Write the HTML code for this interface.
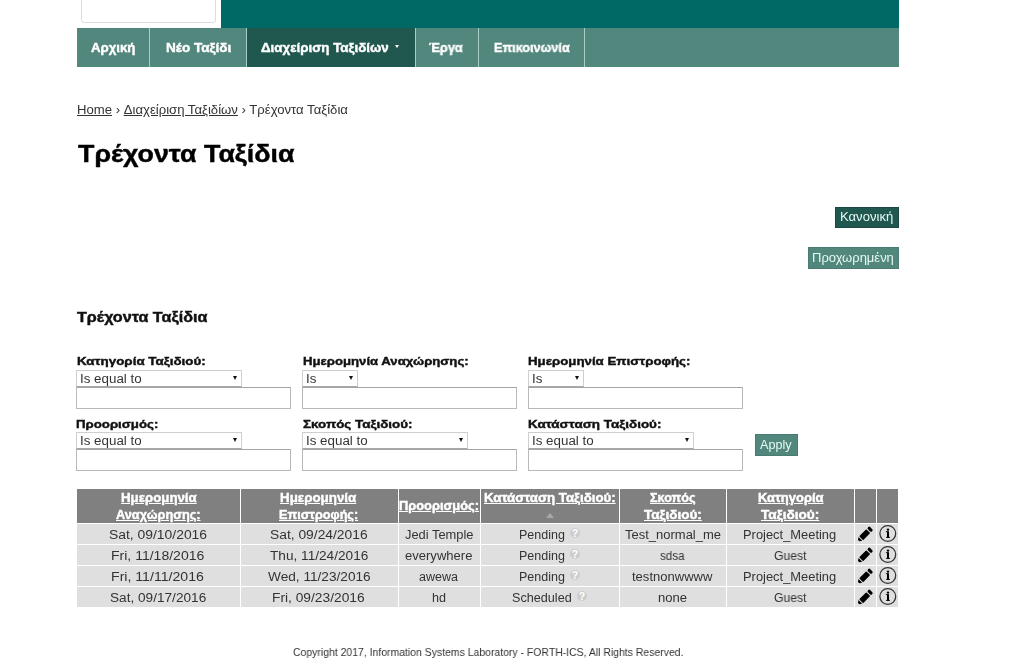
<!DOCTYPE html>
<html><head><meta charset="utf-8"><style>
*{box-sizing:border-box;margin:0;padding:0}
html,body{width:1024px;height:672px;overflow:hidden;background:#fff}
body{position:relative;font-family:"Liberation Sans",sans-serif;color:#333}
.a{position:absolute;white-space:nowrap}
.t{display:inline-block;transform-origin:0 50%;will-change:transform}
u{text-decoration:underline}
.blk{position:absolute}
.sel{position:absolute;height:17px;border:1px solid #cfcfcf;border-bottom:1px solid #a8a8a8;background:#fff;box-shadow:0 1px 0 #d8d8d8}
.sel span{position:absolute;left:2.6px;top:1px;font-size:12.5px;line-height:15px;color:#333;transform-origin:0 50%;display:inline-block;will-change:transform}
.sel i{position:absolute;right:4px;top:4.5px;width:0;height:0;border-left:2.5px solid transparent;border-right:2.5px solid transparent;border-top:4.5px solid #111}
.inp{position:absolute;height:22px;width:215px;border:1px solid #b9b9b9;border-top-color:#a5a5a5;background:#fff}
.hc{position:absolute;background:#808080;color:#fff;font-weight:bold;font-size:12px;text-align:center;line-height:17px}
.hc .t{transform-origin:50% 50%}
.rc{position:absolute;background:#dfdfdf}
.ct{position:absolute;left:0;right:0;top:0;line-height:20px;font-size:12.5px;color:#333;text-align:center}
.ct .t{transform-origin:50% 50%}
.q{position:absolute;width:10px;height:10px;border-radius:5px;background:#cdcdcd;color:#fff;font-size:10.5px;line-height:10px;text-align:center;font-weight:bold}
.pen{position:absolute;left:0;top:0}
.inf{position:absolute;left:0;top:0}
</style></head><body>
<div class="blk" style="left:81px;top:-10px;width:135px;height:33px;border:1px solid #dcdcdc;border-radius:3px;background:#fff"></div>
<div class="blk" style="left:221px;top:0;width:678px;height:28px;background:#006865"></div>
<div class="blk" style="left:77px;top:28px;width:822px;height:39px;background:#52877d"></div>
<div class="blk" style="left:247px;top:28px;width:168px;height:39px;background:#20574f"></div>
<div class="blk" style="left:149px;top:28px;width:1px;height:39px;background:#a6cfc8"></div>
<div class="blk" style="left:246px;top:28px;width:1px;height:39px;background:#a6cfc8"></div>
<div class="blk" style="left:415px;top:28px;width:1px;height:39px;background:#a6cfc8"></div>
<div class="blk" style="left:478px;top:28px;width:1px;height:39px;background:#a6cfc8"></div>
<div class="blk" style="left:584px;top:28px;width:1px;height:39px;background:#a6cfc8"></div>
<div class="blk" style="left:395px;top:44.5px;width:0;height:0;border-left:2.5px solid transparent;border-right:2.5px solid transparent;border-top:3px solid #fff"></div>
<div class="blk" style="left:835px;top:207px;width:64px;height:21px;background:#20574f;border:1px solid #1a4741"></div>
<div class="blk" style="left:808px;top:247px;width:91px;height:22px;background:#52877d;border:1px solid #4a7b72"></div>
<div class="blk" style="left:755px;top:434px;width:43px;height:22px;background:#52877d;border:1px solid #4a7b72"></div>
<div class="sel" style="left:76px;top:370px;width:166px"><span style="transform:scaleX(1.07)">Is equal to</span><i></i></div>
<div class="sel" style="left:302px;top:370px;width:56px"><span style="transform:scaleX(1.07)">Is</span><i></i></div>
<div class="sel" style="left:528px;top:370px;width:56px"><span style="transform:scaleX(1.07)">Is</span><i></i></div>
<div class="sel" style="left:76px;top:432px;width:166px"><span style="transform:scaleX(1.07)">Is equal to</span><i></i></div>
<div class="sel" style="left:302px;top:432px;width:166px"><span style="transform:scaleX(1.07)">Is equal to</span><i></i></div>
<div class="sel" style="left:528px;top:432px;width:166px"><span style="transform:scaleX(1.07)">Is equal to</span><i></i></div>
<div class="inp" style="left:76px;top:387px"></div>
<div class="inp" style="left:302px;top:387px"></div>
<div class="inp" style="left:528px;top:387px"></div>
<div class="inp" style="left:76px;top:449px"></div>
<div class="inp" style="left:302px;top:449px"></div>
<div class="inp" style="left:528px;top:449px"></div>
<div class="blk" style="left:77px;top:489px;width:821px;height:118px;background:#fff"></div>
<div class="blk" style="left:77px;top:489px;width:163px;height:34px;background:#808080"></div>
<div class="blk" style="left:241px;top:489px;width:157px;height:34px;background:#808080"></div>
<div class="blk" style="left:399px;top:489px;width:81px;height:34px;background:#808080"></div>
<div class="blk" style="left:481px;top:489px;width:138px;height:34px;background:#808080"></div>
<div class="blk" style="left:620px;top:489px;width:106px;height:34px;background:#808080"></div>
<div class="blk" style="left:727px;top:489px;width:127px;height:34px;background:#808080"></div>
<div class="blk" style="left:855px;top:489px;width:21px;height:34px;background:#808080"></div>
<div class="blk" style="left:877px;top:489px;width:21px;height:34px;background:#808080"></div>
<div class="blk" style="left:546px;top:513px;width:0;height:0;border-left:4.5px solid transparent;border-right:4.5px solid transparent;border-bottom:5px solid #a8a8a8"></div>
<div class="rc" style="left:77px;top:524px;width:163px;height:20px"></div>
<div class="rc" style="left:241px;top:524px;width:157px;height:20px"></div>
<div class="rc" style="left:399px;top:524px;width:81px;height:20px"></div>
<div class="rc" style="left:481px;top:524px;width:138px;height:20px"><div class="q" style="left:89px;top:4px">?</div></div>
<div class="rc" style="left:620px;top:524px;width:106px;height:20px"></div>
<div class="rc" style="left:727px;top:524px;width:127px;height:20px"></div>
<div class="rc" style="left:855px;top:524px;width:21px;height:20px"><svg class="pen" width="23" height="20" viewBox="0 0 23 20"><g transform="translate(9.7 10.65) rotate(-45)"><rect x="-5" y="-2.8" width="10" height="5.6" rx="0.7" fill="#000"/><rect x="6.1" y="-2.8" width="3.1" height="5.6" rx="1.3" fill="#000"/><path d="M-6.1 -2.6 L-6.1 2.6 L-8.2 1.2 Q-9.2 0 -8.2 -1.2 Z" fill="#000"/></g></svg></div>
<div class="rc" style="left:877px;top:524px;width:21px;height:20px"><svg class="inf" width="22" height="20" viewBox="0 0 22 20"><circle cx="10.8" cy="9.5" r="7.9" fill="none" stroke="#333" stroke-width="1.25"/><circle cx="11" cy="5.6" r="1.2" fill="#000"/><rect x="10" y="7.2" width="2" height="6.5" fill="#000"/><rect x="8.9" y="7.2" width="1.3" height="0.9" fill="#000"/><rect x="9.1" y="12.9" width="3.9" height="0.9" fill="#000"/></svg></div>
<div class="rc" style="left:77px;top:545px;width:163px;height:20px"></div>
<div class="rc" style="left:241px;top:545px;width:157px;height:20px"></div>
<div class="rc" style="left:399px;top:545px;width:81px;height:20px"></div>
<div class="rc" style="left:481px;top:545px;width:138px;height:20px"><div class="q" style="left:89px;top:4px">?</div></div>
<div class="rc" style="left:620px;top:545px;width:106px;height:20px"></div>
<div class="rc" style="left:727px;top:545px;width:127px;height:20px"></div>
<div class="rc" style="left:855px;top:545px;width:21px;height:20px"><svg class="pen" width="23" height="20" viewBox="0 0 23 20"><g transform="translate(9.7 10.65) rotate(-45)"><rect x="-5" y="-2.8" width="10" height="5.6" rx="0.7" fill="#000"/><rect x="6.1" y="-2.8" width="3.1" height="5.6" rx="1.3" fill="#000"/><path d="M-6.1 -2.6 L-6.1 2.6 L-8.2 1.2 Q-9.2 0 -8.2 -1.2 Z" fill="#000"/></g></svg></div>
<div class="rc" style="left:877px;top:545px;width:21px;height:20px"><svg class="inf" width="22" height="20" viewBox="0 0 22 20"><circle cx="10.8" cy="9.5" r="7.9" fill="none" stroke="#333" stroke-width="1.25"/><circle cx="11" cy="5.6" r="1.2" fill="#000"/><rect x="10" y="7.2" width="2" height="6.5" fill="#000"/><rect x="8.9" y="7.2" width="1.3" height="0.9" fill="#000"/><rect x="9.1" y="12.9" width="3.9" height="0.9" fill="#000"/></svg></div>
<div class="rc" style="left:77px;top:566px;width:163px;height:20px"></div>
<div class="rc" style="left:241px;top:566px;width:157px;height:20px"></div>
<div class="rc" style="left:399px;top:566px;width:81px;height:20px"></div>
<div class="rc" style="left:481px;top:566px;width:138px;height:20px"><div class="q" style="left:89px;top:4px">?</div></div>
<div class="rc" style="left:620px;top:566px;width:106px;height:20px"></div>
<div class="rc" style="left:727px;top:566px;width:127px;height:20px"></div>
<div class="rc" style="left:855px;top:566px;width:21px;height:20px"><svg class="pen" width="23" height="20" viewBox="0 0 23 20"><g transform="translate(9.7 10.65) rotate(-45)"><rect x="-5" y="-2.8" width="10" height="5.6" rx="0.7" fill="#000"/><rect x="6.1" y="-2.8" width="3.1" height="5.6" rx="1.3" fill="#000"/><path d="M-6.1 -2.6 L-6.1 2.6 L-8.2 1.2 Q-9.2 0 -8.2 -1.2 Z" fill="#000"/></g></svg></div>
<div class="rc" style="left:877px;top:566px;width:21px;height:20px"><svg class="inf" width="22" height="20" viewBox="0 0 22 20"><circle cx="10.8" cy="9.5" r="7.9" fill="none" stroke="#333" stroke-width="1.25"/><circle cx="11" cy="5.6" r="1.2" fill="#000"/><rect x="10" y="7.2" width="2" height="6.5" fill="#000"/><rect x="8.9" y="7.2" width="1.3" height="0.9" fill="#000"/><rect x="9.1" y="12.9" width="3.9" height="0.9" fill="#000"/></svg></div>
<div class="rc" style="left:77px;top:587px;width:163px;height:20px"></div>
<div class="rc" style="left:241px;top:587px;width:157px;height:20px"></div>
<div class="rc" style="left:399px;top:587px;width:81px;height:20px"></div>
<div class="rc" style="left:481px;top:587px;width:138px;height:20px"><div class="q" style="left:96px;top:4px">?</div></div>
<div class="rc" style="left:620px;top:587px;width:106px;height:20px"></div>
<div class="rc" style="left:727px;top:587px;width:127px;height:20px"></div>
<div class="rc" style="left:855px;top:587px;width:21px;height:20px"><svg class="pen" width="23" height="20" viewBox="0 0 23 20"><g transform="translate(9.7 10.65) rotate(-45)"><rect x="-5" y="-2.8" width="10" height="5.6" rx="0.7" fill="#000"/><rect x="6.1" y="-2.8" width="3.1" height="5.6" rx="1.3" fill="#000"/><path d="M-6.1 -2.6 L-6.1 2.6 L-8.2 1.2 Q-9.2 0 -8.2 -1.2 Z" fill="#000"/></g></svg></div>
<div class="rc" style="left:877px;top:587px;width:21px;height:20px"><svg class="inf" width="22" height="20" viewBox="0 0 22 20"><circle cx="10.8" cy="9.5" r="7.9" fill="none" stroke="#333" stroke-width="1.25"/><circle cx="11" cy="5.6" r="1.2" fill="#000"/><rect x="10" y="7.2" width="2" height="6.5" fill="#000"/><rect x="8.9" y="7.2" width="1.3" height="0.9" fill="#000"/><rect x="9.1" y="12.9" width="3.9" height="0.9" fill="#000"/></svg></div>
<div class="a" id="n1" style="left:90.50px;top:37.52px;font-size:13px;line-height:20px;font-weight:bold;color:#fff;-webkit-text-stroke:0.42px #fff;"><span class="t" style="transform:scaleX(1.0156)">Αρχική</span></div>
<div class="a" id="n2" style="left:165.50px;top:37.52px;font-size:13px;line-height:20px;font-weight:bold;color:#fff;-webkit-text-stroke:0.42px #fff;"><span class="t" style="transform:scaleX(1.0423)">Νέο Ταξίδι</span></div>
<div class="a" id="n3" style="left:261.36px;top:37.52px;font-size:13px;line-height:20px;font-weight:bold;color:#fff;-webkit-text-stroke:0.42px #fff;"><span class="t" style="transform:scaleX(1.0268)">Διαχείριση Ταξιδίων</span></div>
<div class="a" id="n4" style="left:429.08px;top:37.52px;font-size:13px;line-height:20px;font-weight:bold;color:#fff;-webkit-text-stroke:0.42px #fff;"><span class="t" style="transform:scaleX(0.9822)">Έργα</span></div>
<div class="a" id="n5" style="left:493.75px;top:37.52px;font-size:13px;line-height:20px;font-weight:bold;color:#fff;-webkit-text-stroke:0.42px #fff;"><span class="t" style="transform:scaleX(0.9747)">Επικοινωνία</span></div>
<div class="a" id="bc" style="left:77.08px;top:100.09px;font-size:12.5px;line-height:20px;font-weight:normal;color:#333;"><span class="t" style="transform:scaleX(1.0507)"><u>Home</u> › <u>Διαχείριση Ταξιδίων</u> › Τρέχοντα Ταξίδια</span></div>
<div class="a" id="ti" style="left:78.16px;top:144.12px;font-size:24px;line-height:20px;font-weight:bold;color:#000;-webkit-text-stroke:0.42px #000;"><span class="t" style="transform:scaleX(1.1174)">Τρέχοντα Ταξίδια</span></div>
<div class="a" id="b1" style="left:840.40px;top:207.09px;font-size:12.5px;line-height:20px;font-weight:normal;color:#e6fbf4;"><span class="t" style="transform:scaleX(1.0463)">Κανονική</span></div>
<div class="a" id="b2" style="left:812.00px;top:247.69px;font-size:12.5px;line-height:20px;font-weight:normal;color:#e6fbf4;"><span class="t" style="transform:scaleX(1.0389)">Προχωρημένη</span></div>
<div class="a" id="h3" style="left:77.36px;top:306.67px;font-size:14px;line-height:20px;font-weight:bold;color:#111;-webkit-text-stroke:0.42px #111;"><span class="t" style="transform:scaleX(1.1535)">Τρέχοντα Ταξίδια</span></div>
<div class="a" id="l1" style="left:77.08px;top:351.33px;font-size:11.5px;line-height:20px;font-weight:bold;color:#111;-webkit-text-stroke:0.42px #111;"><span class="t" style="transform:scaleX(1.1643)">Κατηγορία Ταξιδιού:</span></div>
<div class="a" id="l2" style="left:302.50px;top:351.33px;font-size:11.5px;line-height:20px;font-weight:bold;color:#111;-webkit-text-stroke:0.42px #111;"><span class="t" style="transform:scaleX(1.1445)">Ημερομηνία Αναχώρησης:</span></div>
<div class="a" id="l3" style="left:528.48px;top:351.33px;font-size:11.5px;line-height:20px;font-weight:bold;color:#111;-webkit-text-stroke:0.42px #111;"><span class="t" style="transform:scaleX(1.1541)">Ημερομηνία Επιστροφής:</span></div>
<div class="a" id="l4" style="left:76.48px;top:413.93px;font-size:11.5px;line-height:20px;font-weight:bold;color:#111;-webkit-text-stroke:0.42px #111;"><span class="t" style="transform:scaleX(1.1514)">Προορισμός:</span></div>
<div class="a" id="l5" style="left:303.00px;top:413.93px;font-size:11.5px;line-height:20px;font-weight:bold;color:#111;-webkit-text-stroke:0.42px #111;"><span class="t" style="transform:scaleX(1.1659)">Σκοπός Ταξιδιού:</span></div>
<div class="a" id="l6" style="left:528.48px;top:413.93px;font-size:11.5px;line-height:20px;font-weight:bold;color:#111;-webkit-text-stroke:0.42px #111;"><span class="t" style="transform:scaleX(1.1694)">Κατάσταση Ταξιδιού:</span></div>
<div class="a" id="ap" style="left:760.24px;top:434.69px;font-size:12.5px;line-height:20px;font-weight:normal;color:#e6fbf4;"><span class="t" style="transform:scaleX(1.0097)">Apply</span></div>
<div class="a" id="ft" style="left:292.50px;top:641.63px;font-size:11.5px;line-height:20px;font-weight:normal;color:#333;"><span class="t" style="transform:scaleX(0.9082)">Copyright 2017, Information Systems Laboratory - FORTH-ICS, All Rights Reserved.</span></div>
<div class="a" id="c00" style="left:109.20px;top:524.89px;font-size:12.5px;line-height:20px;font-weight:normal;color:#333;"><span class="t" style="transform:scaleX(1.1107)">Sat, 09/10/2016</span></div>
<div class="a" id="c01" style="left:269.96px;top:524.89px;font-size:12.5px;line-height:20px;font-weight:normal;color:#333;"><span class="t" style="transform:scaleX(1.1054)">Sat, 09/24/2016</span></div>
<div class="a" id="c02" style="left:404.56px;top:524.89px;font-size:12.5px;line-height:20px;font-weight:normal;color:#333;"><span class="t" style="transform:scaleX(1.0304)">Jedi Temple</span></div>
<div class="a" id="c03" style="left:518.80px;top:524.89px;font-size:12.5px;line-height:20px;font-weight:normal;color:#333;"><span class="t" style="transform:scaleX(0.9963)">Pending</span></div>
<div class="a" id="c04" style="left:625.10px;top:524.89px;font-size:12.5px;line-height:20px;font-weight:normal;color:#333;"><span class="t" style="transform:scaleX(1.0389)">Test_normal_me</span></div>
<div class="a" id="c05" style="left:742.70px;top:524.89px;font-size:12.5px;line-height:20px;font-weight:normal;color:#333;"><span class="t" style="transform:scaleX(1.0317)">Project_Meeting</span></div>
<div class="a" id="c10" style="left:111.10px;top:545.89px;font-size:12.5px;line-height:20px;font-weight:normal;color:#333;"><span class="t" style="transform:scaleX(1.1220)">Fri, 11/18/2016</span></div>
<div class="a" id="c11" style="left:269.70px;top:545.89px;font-size:12.5px;line-height:20px;font-weight:normal;color:#333;"><span class="t" style="transform:scaleX(1.0912)">Thu, 11/24/2016</span></div>
<div class="a" id="c12" style="left:404.70px;top:545.89px;font-size:12.5px;line-height:20px;font-weight:normal;color:#333;"><span class="t" style="transform:scaleX(1.0434)">everywhere</span></div>
<div class="a" id="c13" style="left:518.80px;top:545.89px;font-size:12.5px;line-height:20px;font-weight:normal;color:#333;"><span class="t" style="transform:scaleX(0.9963)">Pending</span></div>
<div class="a" id="c14" style="left:660.20px;top:545.89px;font-size:12.5px;line-height:20px;font-weight:normal;color:#333;"><span class="t" style="transform:scaleX(0.9284)">sdsa</span></div>
<div class="a" id="c15" style="left:773.90px;top:545.89px;font-size:12.5px;line-height:20px;font-weight:normal;color:#333;"><span class="t" style="transform:scaleX(0.9706)">Guest</span></div>
<div class="a" id="c20" style="left:111.20px;top:566.89px;font-size:12.5px;line-height:20px;font-weight:normal;color:#333;"><span class="t" style="transform:scaleX(1.1297)">Fri, 11/11/2016</span></div>
<div class="a" id="c21" style="left:268.00px;top:566.89px;font-size:12.5px;line-height:20px;font-weight:normal;color:#333;"><span class="t" style="transform:scaleX(1.0916)">Wed, 11/23/2016</span></div>
<div class="a" id="c22" style="left:419.00px;top:566.89px;font-size:12.5px;line-height:20px;font-weight:normal;color:#333;"><span class="t" style="transform:scaleX(1.0023)">awewa</span></div>
<div class="a" id="c23" style="left:518.80px;top:566.89px;font-size:12.5px;line-height:20px;font-weight:normal;color:#333;"><span class="t" style="transform:scaleX(0.9963)">Pending</span></div>
<div class="a" id="c24" style="left:632.44px;top:566.89px;font-size:12.5px;line-height:20px;font-weight:normal;color:#333;"><span class="t" style="transform:scaleX(1.0423)">testnonwwww</span></div>
<div class="a" id="c25" style="left:742.70px;top:566.89px;font-size:12.5px;line-height:20px;font-weight:normal;color:#333;"><span class="t" style="transform:scaleX(1.0317)">Project_Meeting</span></div>
<div class="a" id="c30" style="left:109.94px;top:587.89px;font-size:12.5px;line-height:20px;font-weight:normal;color:#333;"><span class="t" style="transform:scaleX(1.0899)">Sat, 09/17/2016</span></div>
<div class="a" id="c31" style="left:271.70px;top:587.89px;font-size:12.5px;line-height:20px;font-weight:normal;color:#333;"><span class="t" style="transform:scaleX(1.1014)">Fri, 09/23/2016</span></div>
<div class="a" id="c32" style="left:431.60px;top:587.89px;font-size:12.5px;line-height:20px;font-weight:normal;color:#333;"><span class="t" style="transform:scaleX(1.0061)">hd</span></div>
<div class="a" id="c33" style="left:512.12px;top:587.89px;font-size:12.5px;line-height:20px;font-weight:normal;color:#333;"><span class="t" style="transform:scaleX(1.0105)">Scheduled</span></div>
<div class="a" id="c34" style="left:658.40px;top:587.89px;font-size:12.5px;line-height:20px;font-weight:normal;color:#333;"><span class="t" style="transform:scaleX(1.0449)">none</span></div>
<div class="a" id="c35" style="left:773.90px;top:587.89px;font-size:12.5px;line-height:20px;font-weight:normal;color:#333;"><span class="t" style="transform:scaleX(0.9706)">Guest</span></div>
<div class="a" id="h0a" style="left:120.50px;top:488.06px;font-size:12px;line-height:20px;font-weight:bold;color:#fff;-webkit-text-stroke:0.42px #fff;"><span class="t" style="transform:scaleX(1.1046)"><u>Ημερομηνία</u></span></div>
<div class="a" id="h0b" style="left:115.60px;top:504.96px;font-size:12px;line-height:20px;font-weight:bold;color:#fff;-webkit-text-stroke:0.42px #fff;"><span class="t" style="transform:scaleX(1.0625)"><u>Αναχώρησης:</u></span></div>
<div class="a" id="h1a" style="left:280.20px;top:488.06px;font-size:12px;line-height:20px;font-weight:bold;color:#fff;-webkit-text-stroke:0.42px #fff;"><span class="t" style="transform:scaleX(1.1124)"><u>Ημερομηνία</u></span></div>
<div class="a" id="h1b" style="left:279.10px;top:504.96px;font-size:12px;line-height:20px;font-weight:bold;color:#fff;-webkit-text-stroke:0.42px #fff;"><span class="t" style="transform:scaleX(1.0557)"><u>Επιστροφής:</u></span></div>
<div class="a" id="h2" style="left:398.80px;top:496.26px;font-size:12px;line-height:20px;font-weight:bold;color:#fff;-webkit-text-stroke:0.42px #fff;"><span class="t" style="transform:scaleX(1.0719)"><u>Προορισμός:</u></span></div>
<div class="a" id="h3h" style="left:484.00px;top:488.06px;font-size:12px;line-height:20px;font-weight:bold;color:#fff;-webkit-text-stroke:0.42px #fff;"><span class="t" style="transform:scaleX(1.1059)"><u>Κατάσταση Ταξιδιού:</u></span></div>
<div class="a" id="h4a" style="left:650.20px;top:488.06px;font-size:12px;line-height:20px;font-weight:bold;color:#fff;-webkit-text-stroke:0.42px #fff;"><span class="t" style="transform:scaleX(1.0524)"><u>Σκοπός</u></span></div>
<div class="a" id="h4b" style="left:643.88px;top:504.96px;font-size:12px;line-height:20px;font-weight:bold;color:#fff;-webkit-text-stroke:0.42px #fff;"><span class="t" style="transform:scaleX(1.1255)"><u>Ταξιδιού:</u></span></div>
<div class="a" id="h5a" style="left:757.56px;top:488.06px;font-size:12px;line-height:20px;font-weight:bold;color:#fff;-webkit-text-stroke:0.42px #fff;"><span class="t" style="transform:scaleX(1.0812)"><u>Κατηγορία</u></span></div>
<div class="a" id="h5b" style="left:760.60px;top:504.96px;font-size:12px;line-height:20px;font-weight:bold;color:#fff;-webkit-text-stroke:0.42px #fff;"><span class="t" style="transform:scaleX(1.1338)"><u>Ταξιδιού:</u></span></div>
</body></html>
